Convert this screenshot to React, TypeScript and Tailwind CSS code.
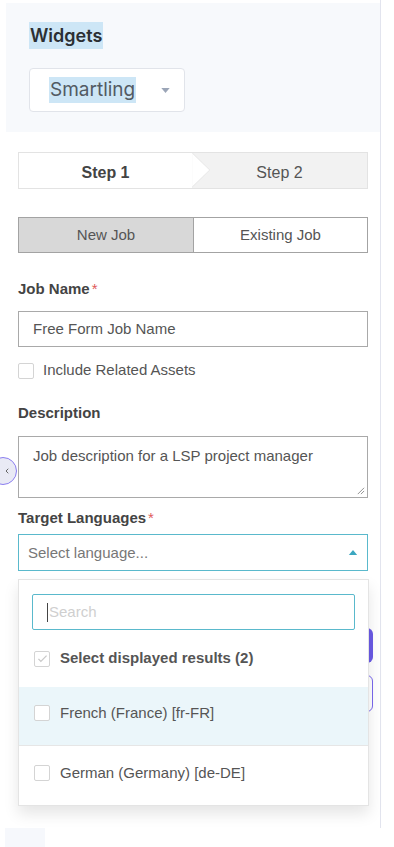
import { ChevronLeft } from "lucide-react";

function Box({ checked = false }: { checked?: boolean }) {
  return (
    <span className="flex h-[16px] w-[16px] shrink-0 items-center justify-center rounded-[2px] border border-[#d4d4d4] bg-white">
      {checked && (
        <svg viewBox="0 0 16 16" className="h-[13px] w-[13px]">
          <path d="M3 8.5l3 3 7-7" fill="none" stroke="#c9c9c9" strokeWidth="1.6" />
        </svg>
      )}
    </span>
  );
}

const languages = [
  { label: "French (France) [fr-FR]", active: true },
  { label: "German (Germany) [de-DE]", active: false },
];

export default function App() {
  return (
    <div className="relative h-[847px] w-[394px] overflow-hidden bg-white font-['Liberation_Sans',Arial,sans-serif] leading-[18px] text-[#555]">
      <div className="relative h-[828px] w-[381px] border-r border-[#e2e4ee] pt-[3px]">

        {/* Widgets header */}
        <div className="ml-[6px] h-[129px] bg-[#f7f9fc] pl-[23px] pt-[19px] font-['Inter',sans-serif]">
          <span className="inline-block bg-[#cde6f6] px-[1px] py-[2px] text-[18px] font-semibold leading-[23px] text-[#2b2f33]">
            Widgets
          </span>
          <div className="mt-[19px] flex h-[44px] w-[156px] items-center rounded-[4px] border border-[#e1e4ea] bg-white pl-[19px]">
            <span className="bg-[#cde6f6] px-[1px] text-[19px] leading-[26px] text-[#525a63]">Smartling</span>
            <svg viewBox="0 0 10 6" className="ml-[25px] h-[5px] w-[9px]">
              <path d="M0 0h10L5 6z" fill="#9ba5b7" />
            </svg>
          </div>
        </div>

        <div className="ml-[18px] w-[350px]">

          {/* Steps */}
          <div className="mt-[20px] flex h-[37px] border border-[#e3e3e3] bg-[#f2f2f2] text-[16px]">
            <div className="relative flex w-[173px] items-center justify-center bg-white pt-[4px] font-bold text-[#444]">
              Step 1
              <svg viewBox="0 0 19 36" className="absolute right-[-19px] top-0 h-[35px] w-[19px]">
                <path d="M0 0L18 17.5L0 35z" fill="#fff" />
                <path d="M0 0L18 17.5L0 35" fill="none" stroke="#e6e6e6" strokeWidth="1" />
              </svg>
            </div>
            <div className="flex flex-1 items-center justify-center pt-[4px] text-[#555]">Step 2</div>
          </div>

          {/* New / Existing toggle */}
          <div className="mt-[28px] flex h-[36px] border border-[#a3a3a3] text-[15px]">
            <div className="flex w-[175px] items-center justify-center border-r border-[#a3a3a3] bg-[#d8d8d8] text-[#555]">
              New Job
            </div>
            <div className="flex flex-1 items-center justify-center bg-white text-[#555]">Existing Job</div>
          </div>

          {/* Job name */}
          <div className="mt-[27px] text-[15px] font-bold text-[#444]">
            Job Name<span className="ml-[2px] font-normal text-[#e05a5a]">*</span>
          </div>
          <div className="mt-[13px] flex h-[36px] items-center border border-[#a9a9a9] pl-[14px] text-[15px] text-[#555]">
            Free Form Job Name
          </div>
          <div className="mt-[16px] flex h-[16px] items-center gap-[9px] text-[15px] text-[#555]">
            <Box />
            <span className="-mt-[2px]">Include Related Assets</span>
          </div>

          {/* Description */}
          <div className="mt-[25px] text-[15px] font-bold text-[#444]">Description</div>
          <div className="relative mt-[14px] h-[62px] border border-[#a9a9a9] pl-[14px] pt-[10px] text-[15px] text-[#555]">
            Job description for a LSP project manager
            <svg viewBox="0 0 10 10" className="absolute bottom-[2px] right-[2px] h-[9px] w-[9px]">
              <path d="M9 2L2 9M9 5.5L5.5 9" stroke="#888" strokeWidth="1" />
            </svg>
          </div>

          {/* Target languages */}
          <div className="mt-[11px] text-[15px] font-bold text-[#444]">
            Target Languages<span className="ml-[2px] font-normal text-[#e05a5a]">*</span>
          </div>
          <div className="mt-[7px] flex h-[37px] items-center justify-between border border-[#5ab9cc] pl-[9px] pr-[9px] text-[15px] text-[#777]">
            <span>Select language...</span>
            <svg viewBox="0 0 10 6" className="h-[5px] w-[10px]">
              <path d="M0 6h10L5 0z" fill="#3ba7c0" />
            </svg>
          </div>

          {/* buttons partly hidden behind the dropdown */}
          <div className="mt-[57px] h-[35px] w-[355px] rounded-[6px] bg-[#6a5ae6]" />
          <div className="mt-[12px] h-[37px] w-[355px] rounded-[6px] border-[1.5px] border-[#7a68ee] bg-white" />
        </div>

        {/* Language dropdown */}
        <div className="absolute left-[18px] top-[579px] w-[351px] border border-[#e4e4e4] bg-white shadow-[0_8px_14px_rgba(0,0,0,0.10)]">
          <div className="px-[13px] pt-[14px]">
            <div className="flex h-[36px] items-center rounded-[2px] border border-[#5ab9cc] pl-[14px] text-[15px] text-[#cfcfcf]">
              <span className="mr-[1px] h-[19px] w-[1px] bg-[#444]" />
              Search
            </div>
          </div>
          <div className="flex h-[57px] items-center gap-[10px] pl-[15px] text-[15px] font-bold text-[#555]">
            <Box checked />
            <span className="-mt-[1px]">Select displayed results (2)</span>
          </div>
          {languages.map(({ label, active }) => (
            <div
              key={label}
              className={`flex h-[59px] items-center gap-[10px] border-b border-[#e6e6e6] pl-[15px] pb-[6px] text-[15px] text-[#555] last:border-b-0 ${
                active ? "bg-[#ebf6fa]" : "bg-white"
              }`}
            >
              <Box />
              <span>{label}</span>
            </div>
          ))}
        </div>

        {/* collapse toggle */}
        <div className="absolute left-[-11px] top-[457px] flex h-[28px] w-[28px] items-center justify-end rounded-full border-[1.5px] border-[#8b7ef0] bg-[#e9eaf5] pr-[5px]">
          <ChevronLeft className="h-[8px] w-[8px] text-[#666]" strokeWidth={3} />
        </div>
      </div>

      <div className="ml-[5px] h-[19px] w-[40px] bg-[#f6f8fc]" />
    </div>
  );
}
